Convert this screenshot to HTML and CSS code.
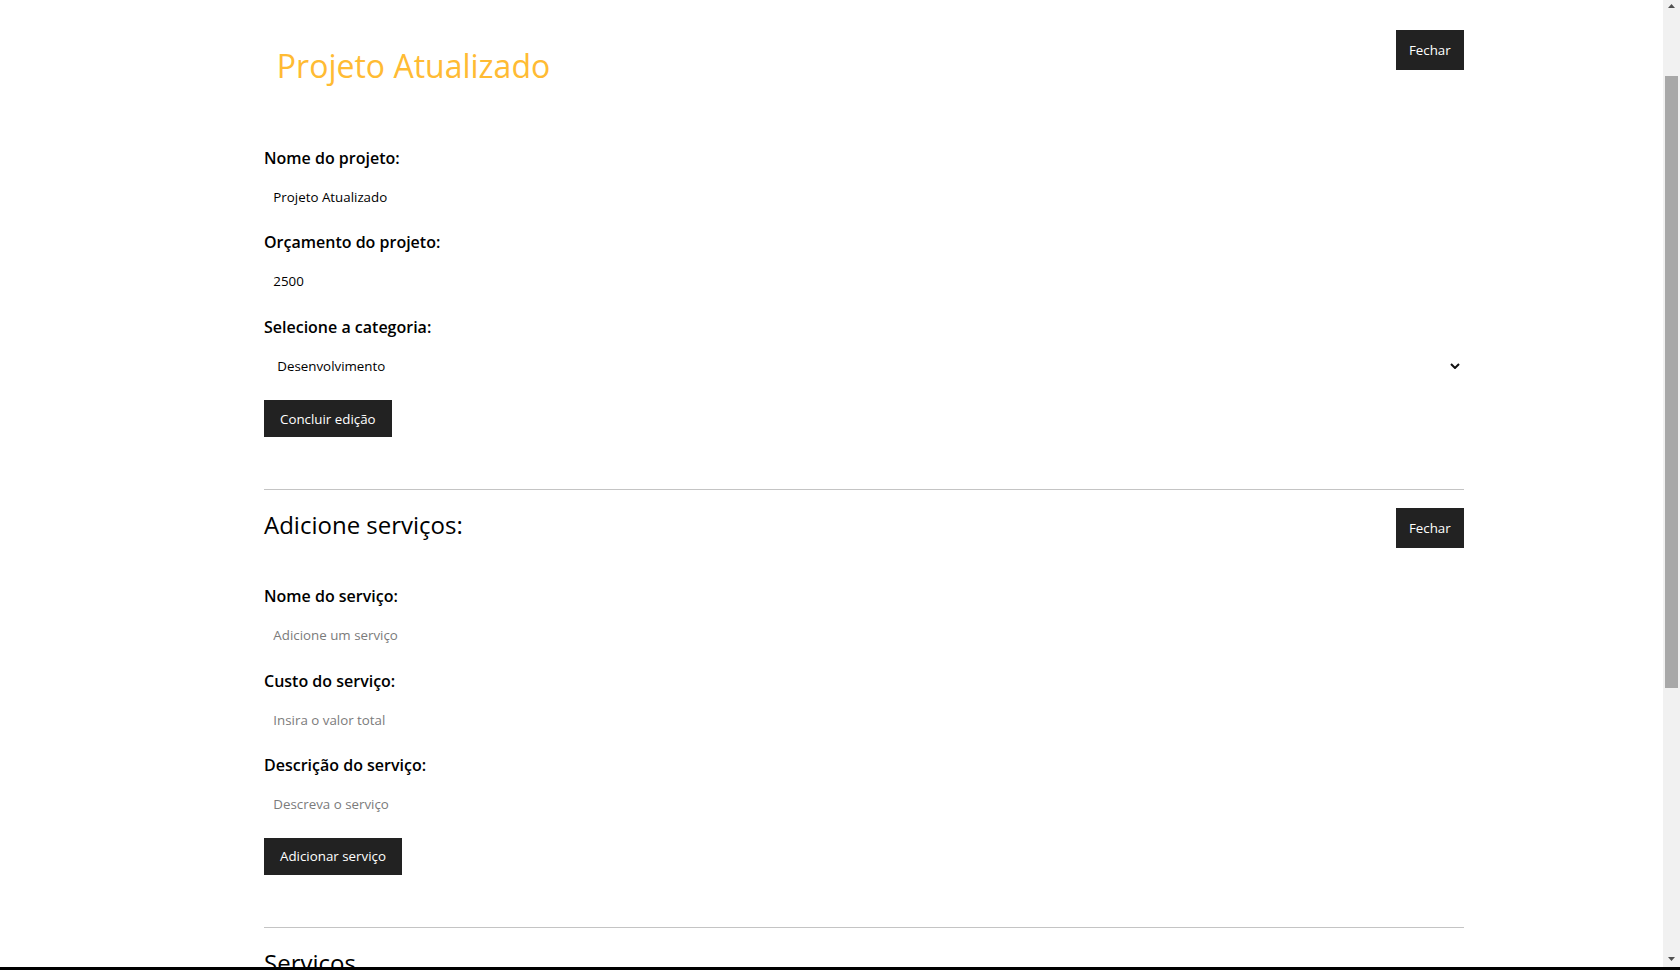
FILE: index.html
```html
<!DOCTYPE html>
<html lang="pt-BR">
<head>
<meta charset="utf-8">
<title>Projeto Atualizado</title>
<link rel="stylesheet" href="styles.css">
</head>
<body>
<div class="viewport">
  <main class="page">
    <section class="block">
      <div class="head">
        <h1 class="title">Projeto Atualizado</h1>
        <button class="btn-close" type="button">Fechar</button>
      </div>
      <form class="form">
        <div class="form-control">
          <label class="label" for="name">Nome do projeto:</label>
          <input class="input" id="name" type="text" value="Projeto Atualizado">
        </div>
        <div class="form-control">
          <label class="label" for="budget">Orçamento do projeto:</label>
          <input class="input" id="budget" type="number" value="2500">
        </div>
        <div class="form-control">
          <label class="label" for="cat">Selecione a categoria:</label>
          <div class="select-wrap">
            <select class="select" id="cat">
              <option>Desenvolvimento</option>
            </select>
            <svg class="chevron" width="10" height="6" viewBox="0 0 10 6" aria-hidden="true"><path d="M1 1 L5 5 L9 1" fill="none" stroke="#111" stroke-width="2"/></svg>
          </div>
        </div>
        <button class="btn-submit" type="button">Concluir edição</button>
      </form>
    </section>
    <section class="block block-service">
      <div class="head head-service">
        <h2 class="subtitle">Adicione serviços:</h2>
        <button class="btn-close" type="button">Fechar</button>
      </div>
      <form class="form">
        <div class="form-control">
          <label class="label" for="sname">Nome do serviço:</label>
          <input class="input" id="sname" type="text" placeholder="Adicione um serviço">
        </div>
        <div class="form-control">
          <label class="label" for="scost">Custo do serviço:</label>
          <input class="input" id="scost" type="number" placeholder="Insira o valor total">
        </div>
        <div class="form-control">
          <label class="label" for="sdesc">Descrição do serviço:</label>
          <input class="input" id="sdesc" type="text" placeholder="Descreva o serviço">
        </div>
        <button class="btn-submit" type="button">Adicionar serviço</button>
      </form>
    </section>
    <h2 class="subtitle services-title">Serviços</h2>
    <p class="empty">Não há serviços cadastrados.</p>
  </main>
</div>
<div class="scrollbar" aria-hidden="true">
  <div class="sb-btn">
    <svg width="7" height="4" viewBox="0 0 7 4"><path d="M0 4 L3.5 0 L7 4Z" fill="#505050"/></svg>
  </div>
  <div class="sb-track"><div class="sb-thumb"></div></div>
  <div class="sb-btn sb-btn-down">
    <svg width="7" height="4" viewBox="0 0 7 4"><path d="M0 0 L3.5 4 L7 0Z" fill="#505050"/></svg>
  </div>
</div>
</body>
</html>
```

FILE: styles.css
```css
html {
  height: 100%;
  overflow: hidden;
  background: #000;
}

body {
  margin: 0;
  height: calc(100% - 3px);
  display: flex;
  overflow: hidden;
  background: #fff;
  color: #000;
  font-family: "Open Sans", "Liberation Sans", sans-serif;
}

.viewport {
  flex: 1;
  min-width: 0;
  overflow: hidden;
}

.scrollbar {
  width: 17px;
  flex: none;
  display: flex;
  flex-direction: column;
  background: #f1f1f1;
}

.sb-btn {
  height: 17px;
  flex: none;
  display: flex;
  justify-content: center;
  padding-top: 4px;
  box-sizing: border-box;
}

.sb-btn-down {
  padding-top: 7px;
}

.sb-track {
  flex: 1;
  padding: 59px 2px 0;
}

.sb-thumb {
  height: 612px;
  background: #a8a8a8;
}

.page {
  width: 1200px;
  margin-left: 264px;
  padding-top: 30.5px;
}

.block {
  border-bottom: 1px solid #c4c4c4;
  padding-bottom: 52px;
}

.block-service {
  padding-top: 18.5px;
}

.head {
  display: flex;
  justify-content: space-between;
  align-items: flex-start;
  margin-bottom: 48px;
}

.head-service {
  margin-bottom: 37px;
  min-height: 40px;
}

.title {
  margin: 0;
  padding: 13.8px 12.8px 11.8px;
  font-size: 32px;
  font-weight: 400;
  line-height: normal;
  color: #ffbb33;
}

.subtitle {
  margin: 0;
  font-size: 24px;
  font-weight: 400;
  line-height: normal;
  color: #000;
}

.btn-close {
  height: 40px;
  margin-top: -1px;
  padding: 0 13.33px;
  border: none;
  background: #222;
  color: #fff;
  font-family: "Open Sans", "Liberation Sans", sans-serif;
  font-size: 13.33px;
  cursor: pointer;
}

.head-service .btn-close {
  margin-top: 0;
}

.form {
  display: flex;
  flex-direction: column;
  align-items: stretch;
}

.form-control {
  display: flex;
  flex-direction: column;
  margin-bottom: 16px;
}

.label {
  margin-bottom: 9.6px;
  font-size: 16px;
  font-weight: 600;
  line-height: normal;
}

.input {
  padding: 9.33px;
  border: none;
  outline: none;
  background: #fff;
  color: #000;
  font-family: "Open Sans", "Liberation Sans", sans-serif;
  font-size: 13.33px;
  line-height: normal;
}

.input::placeholder {
  color: #7b7b7b;
}

.input::-webkit-inner-spin-button,
.input::-webkit-outer-spin-button {
  -webkit-appearance: none;
  margin: 0;
}

.select-wrap {
  position: relative;
}

.select {
  -webkit-appearance: none;
  appearance: none;
  display: block;
  width: 100%;
  height: 37px;
  padding: 0 13.3px;
  border: none;
  outline: none;
  background: #fff;
  color: #000;
  font-family: "Open Sans", "Liberation Sans", sans-serif;
  font-size: 13.33px;
}

.chevron {
  position: absolute;
  right: 4px;
  top: 16px;
}

.btn-submit {
  align-self: flex-start;
  padding: 9.33px 16px;
  border: none;
  background: #222;
  color: #fff;
  font-family: "Open Sans", "Liberation Sans", sans-serif;
  font-size: 13.33px;
  line-height: normal;
  cursor: pointer;
}

.services-title {
  margin-top: 18px;
}

.empty {
  font-size: 16px;
}
```
